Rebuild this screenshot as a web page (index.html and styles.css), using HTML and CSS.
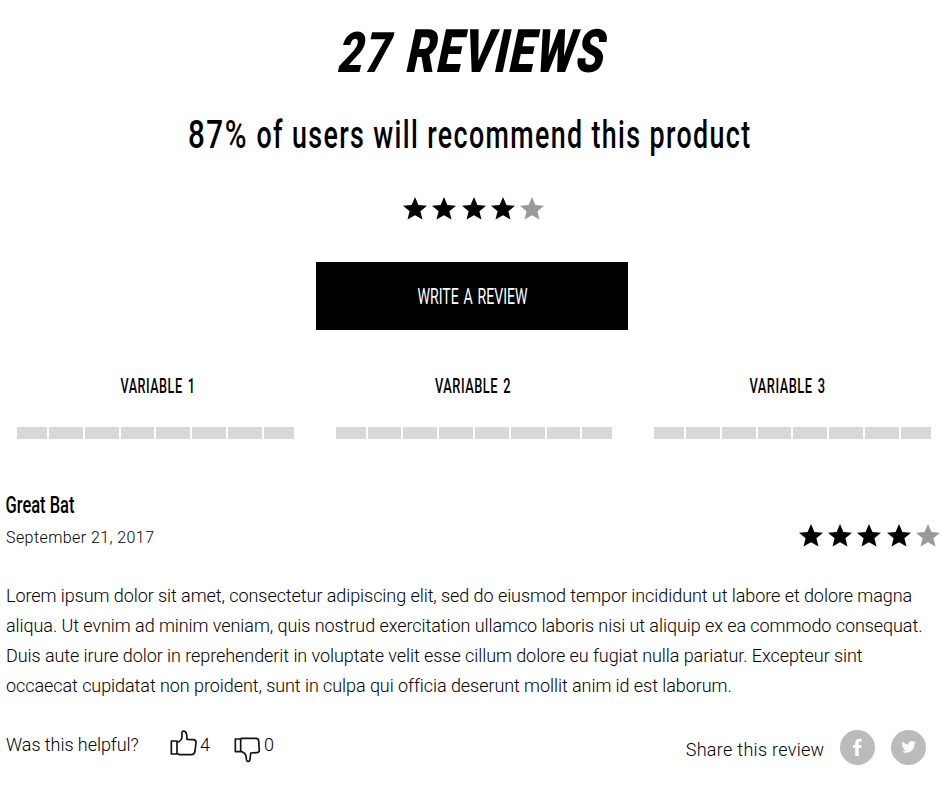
FILE: index.html
```html
<!DOCTYPE html>
<html lang="en">
<head>
<meta charset="utf-8">
<title>Reviews</title>
<link rel="stylesheet" href="styles.css">
</head>
<body>
<svg class="defs" width="0" height="0" aria-hidden="true">
  <symbol id="star" viewBox="0 0 24 23"><path d="M12 0l3.4 8.1 8.6.7-6.6 5.5 2.1 8.2L12 18.3l-7.5 4.2 2.1-8.2L0 8.8l8.6-.7z"/></symbol>
</svg>
<main class="reviews">
  <header class="summary">
    <h1><svg class="title" width="270" height="62"><g transform="translate(0 51) skewX(-12)"><text class="title-count" x="-1" y="0" textLength="53" lengthAdjust="spacingAndGlyphs">27</text><text x="67" y="0" textLength="199" lengthAdjust="spacingAndGlyphs">REVIEWS</text></g></svg></h1>
    <p class="recommend"><svg width="564" height="48"><text x="-1" y="36" textLength="60" lengthAdjust="spacingAndGlyphs">87%</text><text x="67.5" y="36" textLength="495" lengthAdjust="spacingAndGlyphs">of users will recommend this product</text></svg></p>
    <div class="stars"><svg><use href="#star"/></svg><svg><use href="#star"/></svg><svg><use href="#star"/></svg><svg><use href="#star"/></svg><svg class="off"><use href="#star"/></svg></div>
    <button class="write"><svg width="110" height="24"><text x="0.5" y="19.5" textLength="110" lengthAdjust="spacingAndGlyphs">WRITE A REVIEW</text></svg></button>
  </header>
  <section class="variables">
    <div class="variable"><svg width="76" height="24"><text x="0.5" y="19" textLength="75" lengthAdjust="spacingAndGlyphs">VARIABLE 1</text></svg><div class="bar"><i></i><i></i><i></i><i></i><i></i><i></i><i></i><i></i></div></div>
    <div class="variable"><svg width="76" height="24"><text x="-3" y="19" textLength="76" lengthAdjust="spacingAndGlyphs">VARIABLE 2</text></svg><div class="bar"><i></i><i></i><i></i><i></i><i></i><i></i><i></i><i></i></div></div>
    <div class="variable"><svg width="76" height="24"><text x="-7.5" y="19" textLength="76" lengthAdjust="spacingAndGlyphs">VARIABLE 3</text></svg><div class="bar"><i></i><i></i><i></i><i></i><i></i><i></i><i></i><i></i></div></div>
  </section>
  <article class="review">
    <div class="review-head">
      <div>
        <h2><svg width="70" height="30"><text x="-0.5" y="23" textLength="69" lengthAdjust="spacingAndGlyphs">Great Bat</text></svg></h2>
        <time>September 21, 2017</time>
      </div>
      <div class="stars"><svg><use href="#star"/></svg><svg><use href="#star"/></svg><svg><use href="#star"/></svg><svg><use href="#star"/></svg><svg class="off"><use href="#star"/></svg></div>
    </div>
    <p class="body">Lorem ipsum dolor sit amet, consectetur adipiscing elit, sed do eiusmod tempor incididunt ut labore et dolore magna<br>aliqua. Ut evnim ad minim veniam, quis nostrud exercitation ullamco laboris nisi ut aliquip ex ea commodo consequat.<br>Duis aute irure dolor in reprehenderit in voluptate velit esse cillum dolore eu fugiat nulla pariatur. Excepteur sint<br>occaecat cupidatat non proident, sunt in culpa qui officia deserunt mollit anim id est laborum.</p>
    <footer>
      <div class="helpful">
        <span class="question">Was this helpful?</span>
        <svg class="thumb" viewBox="30 26 84 84"><path d="M34 62H51V101H34ZM51 66L57 64Q68 57 66 44Q64 33 70 32Q78 32 80 42L81 57L101 58Q109 59 108 67L105 92Q103 103 94 103H58L51 99"/></svg>
        <span class="votes">4</span>
        <svg class="thumb down" viewBox="224 44 84 84"><path d="M228 56H244V94H228ZM244 54H290Q297 54 298 61L300 90Q300 97 292 97L274 98L272 117Q271 124 265 123Q260 122 261 112Q260 100 253 97L244 92"/></svg>
        <span class="votes">0</span>
      </div>
      <div class="share">
        <span>Share this review</span>
        <a class="social"><svg viewBox="0 0 34 34"><path d="M14.8 25.2v-7.7h-2.1v-3h2.1v-2c0-2.8 1.4-4 3.9-4h2.4v2.9h-1.6c-1 0-1.3.4-1.3 1.3v1.8h2.8l-.4 3h-2.4v7.7z"/></svg></a>
        <a class="social"><svg viewBox="0 0 34 34"><path transform="translate(10.2 9.4) scale(.585)" d="M23.95 4.57a10 10 0 0 1-2.82.77 4.96 4.96 0 0 0 2.16-2.72c-.95.55-2 .95-3.13 1.18a4.92 4.92 0 0 0-8.38 4.48C7.69 8.1 4.07 6.13 1.64 3.16a4.92 4.92 0 0 0 1.52 6.57 4.9 4.9 0 0 1-2.23-.61v.06c0 2.39 1.69 4.38 3.95 4.83a5 5 0 0 1-2.22.08 4.94 4.94 0 0 0 4.6 3.42A9.87 9.87 0 0 1 0 19.54a13.99 13.99 0 0 0 7.55 2.21c9.05 0 14-7.5 14-13.98 0-.21 0-.42-.02-.63a9.94 9.94 0 0 0 2.42-2.57z"/></svg></a>
      </div>
    </footer>
  </article>
</main>
</body>
</html>
```
FILE: styles.css
```css
* { box-sizing: border-box; }
body { margin: 0; background: #fff; color: #000; font-family: Roboto, sans-serif; font-weight: 300; overflow: hidden; }
h1, h2, p { margin: 0; font-weight: 300; }
svg { display: block; overflow: visible; }
.defs { height: 0; }
.reviews { width: 941px; height: 801px; }
.summary { display: flex; flex-direction: column; align-items: center; padding: 21px 0 0 3px; }
.title { font-weight: 900; font-size: 60px; letter-spacing: 1.5px; }
.title-count { font-size: 56px; }
.recommend { margin-top: 29px; padding-right: 3px; font-size: 39px; }
.recommend text { font-weight: 500; letter-spacing: 2px; }
.stars { display: flex; gap: 5.3px; }
.stars svg { width: 24px; height: 23px; }
.stars .off { fill: #999; }
.summary .stars { margin-top: 37px; padding-left: 3px; }
.write { display: flex; justify-content: center; align-items: center; width: 312px; height: 68px; margin-top: 42px; padding: 0; border: 0; background: #000; font: 400 21.5px Roboto, sans-serif; fill: #fff; word-spacing: 2px; }
.variables { display: grid; grid-template-columns: repeat(3, 277px); column-gap: 41.5px; padding-left: 17px; margin-top: 44px; }
.variable { display: flex; flex-direction: column; align-items: center; font-size: 20px; }
.variable svg { margin-left: 4px; }
.variable text { font-weight: 500; letter-spacing: .8px; word-spacing: 2.5px; }
.bar { display: grid; grid-template-columns: 30px repeat(6, 1fr) 30px; gap: 2px; width: 277px; height: 12px; margin-top: 29px; }
.bar i { background: #d8d8d8; }
.review { padding-left: 6px; margin-top: 51px; }
.review-head { display: flex; justify-content: space-between; }
.review-head .stars { margin: 34px 1px 0 0; }
h2 { font-size: 24px; }
h2 text { font-weight: 500; }
time { display: block; margin-top: 8px; line-height: 20px; font-size: 16px; letter-spacing: .42px; }
.body { margin-top: 33px; font-size: 18px; line-height: 30px; letter-spacing: -.065px; white-space: nowrap; }
footer { display: flex; justify-content: space-between; height: 50px; margin-top: 24px; font-size: 18px; }
.helpful, .share { display: flex; }
.helpful { line-height: 39px; }
.question { width: 164px; letter-spacing: -.05px; }
.thumb { width: 28px; height: 28px; margin-top: 4px; fill: none; stroke: #111; stroke-width: 5; stroke-linejoin: round; }
.down { margin: 10px 0 0 24px; }
.votes { margin-left: 2px; }
.share { align-items: flex-start; padding-right: 15px; line-height: 49px; letter-spacing: .3px; }
.social { width: 35px; height: 35px; margin: 5px 0 0 15px; border-radius: 50%; background: #bbb; fill: #fff; }
.social + .social { margin-left: 16.5px; }
.social svg { width: 35px; height: 35px; }
```
